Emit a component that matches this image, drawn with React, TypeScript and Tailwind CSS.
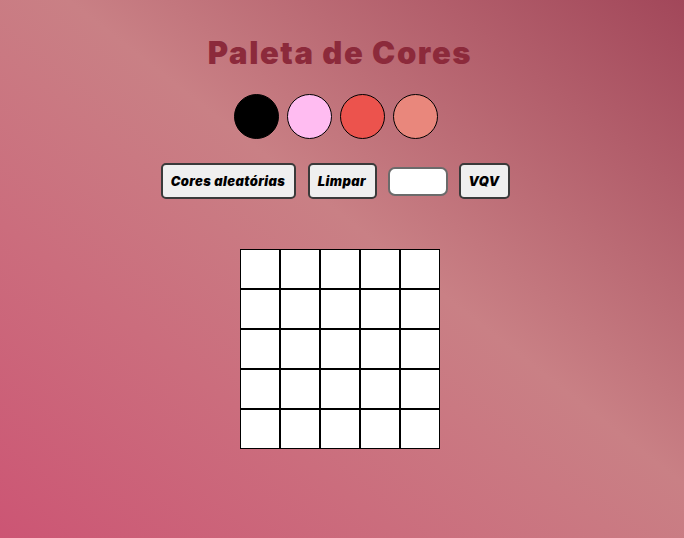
const paleta = ['#000000', '#ffbcf1', '#ec534d', '#e9877c'];

export default function App() {
  const cells = Array.from({ length: 25 }, (_, i) => i);

  return (
    <div className="min-h-screen flex flex-col items-center pr-[4px] bg-linear-to-tr from-[#cc5574] via-[#c98085] via-55% to-[#a2475a] font-['Inter',sans-serif]">
      <h1 className="mt-[33px] text-[31px] leading-[40px] font-black text-[#8c2a3b] tracking-[1.6px]">
        Paleta de Cores
      </h1>

      <div className="mt-[21px] mr-[8px] flex gap-[8px]">
        {paleta.map((cor) => (
          <div
            key={cor}
            className="w-[45px] h-[45px] rounded-full border border-black"
            style={{ backgroundColor: cor }}
          />
        ))}
      </div>

      <div className="mt-[24px] mr-[10px] flex items-center">
        <button className="w-[135px] h-[36px] pt-[2px] rounded-[5px] border-2 border-[#3a3a3a] bg-[#efefef] text-[13px] font-black italic tracking-[0.4px] text-black">
          Cores aleatórias
        </button>
        <button className="ml-[12px] w-[69px] h-[36px] pt-[2px] rounded-[5px] border-2 border-[#3a3a3a] bg-[#efefef] text-[13px] font-black italic tracking-[0.4px] text-black">
          Limpar
        </button>
        <input
          type="text"
          className="ml-[11px] w-[60px] h-[29px] rounded-[7px] border-2 border-[#6b6b6b] bg-white outline-none"
        />
        <button className="ml-[11px] w-[51px] h-[36px] pt-[2px] rounded-[5px] border-2 border-[#3a3a3a] bg-[#efefef] text-[13px] font-black italic tracking-[0.4px] text-black">
          VQV
        </button>
      </div>

      <div className="mt-[50px] grid grid-cols-5 w-[200px]">
        {cells.map((c) => (
          <div key={c} className="w-[40px] h-[40px] bg-white border border-black" />
        ))}
      </div>
    </div>
  );
}
